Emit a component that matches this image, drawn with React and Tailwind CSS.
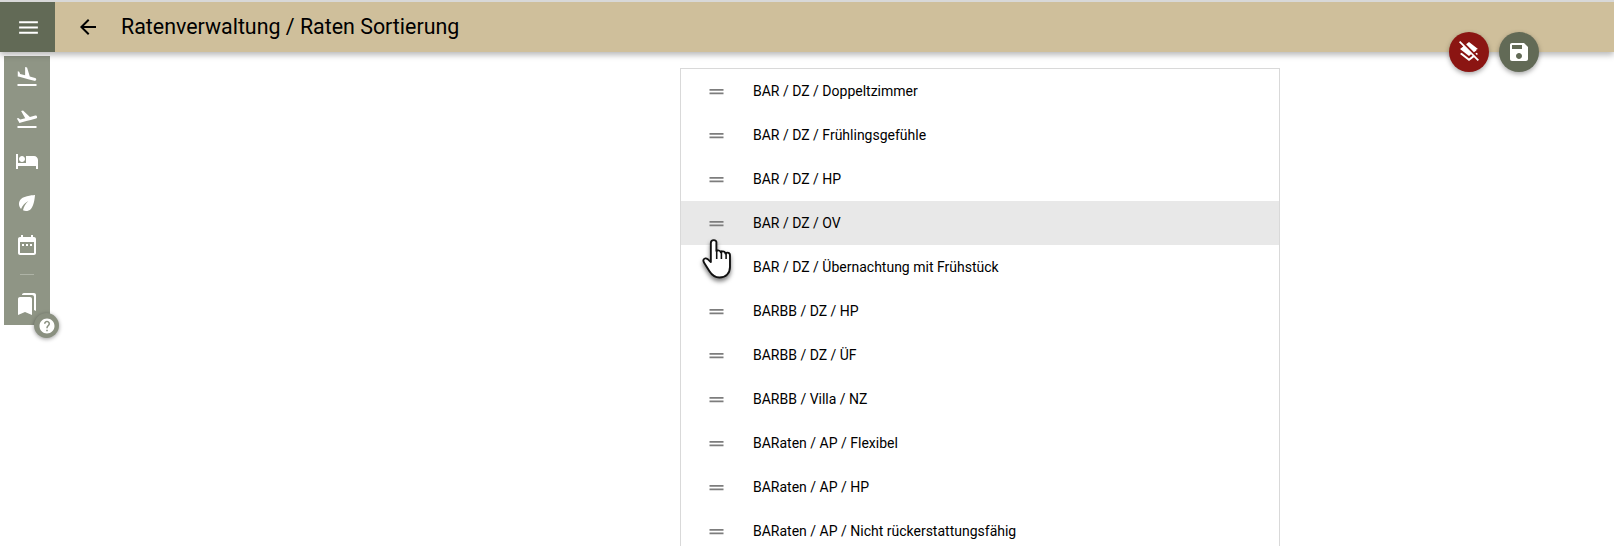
const rates = [
  'BAR / DZ / Doppeltzimmer',
  'BAR / DZ / Frühlingsgefühle',
  'BAR / DZ / HP',
  'BAR / DZ / OV',
  'BAR / DZ / Übernachtung mit Frühstück',
  'BARBB / DZ / HP',
  'BARBB / DZ / ÜF',
  'BARBB / Villa / NZ',
  'BARaten / AP / Flexibel',
  'BARaten / AP / HP',
  'BARaten / AP / Nicht rückerstattungsfähig',
];

const Icon = ({ d, className = '' }) => (
  <svg viewBox="0 0 24 24" fill="currentColor" className={className}>
    <path d={d} />
  </svg>
);

const navIcons = [
  'M2.5 19h19v2h-19zm7.18-5.73l4.35 1.16 5.31 1.42c.8.21 1.62-.26 1.84-1.06.21-.8-.26-1.62-1.06-1.84l-5.31-1.42-2.76-9.02L10.12 2v8.28L5.15 8.95l-.93-2.32-1.45-.39v5.17l1.6.43 5.31 1.43z',
  'M2.5 19h19v2h-19zm19.57-9.36c-.21-.8-1.04-1.28-1.84-1.06L14.92 10l-6.9-6.43-1.93.51 4.14 7.17-4.97 1.33-1.97-1.54-1.45.39 1.82 3.16.77 1.33 1.6-.43 5.31-1.42 4.35-1.16L21 11.49c.81-.23 1.28-1.05 1.07-1.85z',
  'M7 13c1.66 0 3-1.34 3-3S8.66 7 7 7s-3 1.34-3 3 1.34 3 3 3zm12-6h-8v7H3V5H1v15h2v-3h18v3h2v-9c0-2.21-1.79-4-4-4z',
  'M6.05 8.05c-2.73 2.73-2.73 7.15-.02 9.88 1.47-3.4 4.09-6.24 7.36-7.93-2.77 2.34-4.71 5.61-5.39 9.32 2.6 1.23 5.8.78 7.95-1.37C19.43 14.47 20 4 20 4S9.53 4.57 6.05 8.05z',
  'M9 11H7v2h2v-2zm4 0h-2v2h2v-2zm4 0h-2v2h2v-2zm2-7h-1V2h-2v2H8V2H6v2H5c-1.11 0-1.99.9-1.99 2L3 20c0 1.1.89 2 2 2h14c1.1 0 2-.9 2-2V6c0-1.1-.9-2-2-2zm0 16H5V9h14v11z',
];

const bookmarks = 'M19 18l2 1V3c0-1.1-.9-2-2-2H8.99C7.89 1 7 1.9 7 3h10c1.1 0 2 .9 2 2v13zM15 5H5c-1.1 0-2 .9-2 2v16l7-3 7 3V7c0-1.1-.9-2-2-2z';
const dragHandle = 'M20 9H4v2h16V9zM4 15h16v-2H4v2z';
const help = 'M12 2C6.48 2 2 6.48 2 12s4.48 10 10 10 10-4.48 10-10S17.52 2 12 2zm1 17h-2v-2h2v2zm2.07-7.75l-.9.92C13.45 12.9 13 13.5 13 15h-2v-.5c0-1.1.45-2.1 1.17-2.83l1.24-1.26c.37-.36.59-.86.59-1.41 0-1.1-.9-2-2-2s-2 .9-2 2H8c0-2.21 1.79-4 4-4s4 1.79 4 4c0 .88-.36 1.68-.93 2.25z';

const App = () => {
  return (
    <div className="relative h-[546px] w-[1614px] overflow-hidden bg-white font-['Roboto',sans-serif] text-black">
      {/* Top bar */}
      <header className="relative z-10 flex h-[52px] items-center border-t-2 border-[#d8d8d8] bg-[#cfbf9b] shadow-[0_3px_6px_rgba(0,0,0,0.28)]">
        <div className="flex h-[50px] w-[55px] items-center justify-center bg-[#626a56] pl-[2px] text-white">
          <Icon className="h-[25px] w-[25px]" d="M3 18h18v-2H3v2zm0-5h18v-2H3v2zm0-7v2h18V6H3z" />
        </div>
        <Icon className="ml-[21px] h-6 w-6" d="M20 11H7.83l5.59-5.59L12 4l-8 8 8 8 1.41-1.41L7.83 13H20v-2z" />
        <h1 className="ml-[21px] text-[21.4px] leading-none">Ratenverwaltung / Raten Sortierung</h1>
      </header>

      {/* Floating buttons */}
      <div className="absolute left-[1449px] top-[32px] z-20 flex gap-[10px]">
        <button className="flex h-10 w-10 items-center justify-center rounded-full bg-[#8b1512] text-white shadow-[0_2px_5px_rgba(0,0,0,0.35)]">
          <Icon className="h-6 w-6" d="M19.81 14.99l1.19-.92-1.43-1.43-1.19.92 1.43 1.43zm-.45-5.45L21 9l-9-7-2.91 2.27 7.87 7.88 2.4-1.61zM3.27 1L2 2.27l4.22 4.22L3 9l1.63 1.27L12 16l2.1-1.63 1.43 1.43L12 18.54l-7.37-5.73L3 14.07l9 7 4.95-3.85L20.73 21 22 19.73 3.27 1z" />
        </button>
        <button className="flex h-10 w-10 items-center justify-center rounded-full bg-[#626a56] text-white shadow-[0_2px_5px_rgba(0,0,0,0.35)]">
          <Icon className="h-6 w-6" d="M17 3H5c-1.11 0-2 .9-2 2v14c0 1.1.89 2 2 2h14c1.1 0 2-.9 2-2V7l-4-4zm-5 16c-1.66 0-3-1.34-3-3s1.34-3 3-3 3 1.34 3 3-1.34 3-3 3zm3-10H5V5h10v4z" />
        </button>
      </div>

      <div className="flex items-start">
        {/* Side menu */}
        <nav className="relative ml-1 mt-[4px] flex h-[269px] w-[46px] shrink-0 flex-col items-center bg-[#8f9585] pt-[9px] text-white">
          {navIcons.map((d) => (
            <Icon key={d} className="mb-[18px] h-6 w-6 shrink-0" d={d} />
          ))}
          <div className="-mt-px mb-[17px] h-px w-[14px] bg-[#aeb3a6]" />
          <Icon className="h-6 w-6 shrink-0" d={bookmarks} />
          <div className="absolute left-[30px] top-[257px] flex h-[25px] w-[25px] items-center justify-center rounded-full bg-[#8a9080] text-white shadow-[0_1px_4px_rgba(0,0,0,0.4)]">
            <Icon className="h-[18px] w-[18px]" d={help} />
          </div>
        </nav>

        {/* Rate list */}
        <div className="ml-[630px] mt-[16px] w-[600px] shrink-0 border border-[#d9d9d9] bg-white">
          {rates.map((rate) => (
            <div
              key={rate}
              className={`flex h-[44px] items-center text-[14px] ${rate === 'BAR / DZ / OV' ? 'bg-[#e8e8e8]' : ''}`}
            >
              <Icon className="ml-[25px] h-[21px] w-[21px] shrink-0 text-[#7d7d7d]" d={dragHandle} />
              <span className="ml-[26px]">{rate}</span>
            </div>
          ))}
        </div>
      </div>

      {/* Mouse pointer */}
      <svg viewBox="0 0 32 44" className="absolute left-[702px] top-[237px] z-10 h-[46px] w-[34px] drop-shadow-[0_3px_2px_rgba(0,0,0,0.5)]">
        <path
          d="M11 3c-1.6 0-2.8 1.2-2.8 2.8V24l-3-2.8c-1.4-1.2-3.4-1-4 .6-.4 1 0 2 .7 3l5 8c2 3.2 5 6 9.600 6 6 0 10-4 10-10V17.500c0-1.500-1-2.500-2.400-2.500-.8 0-1.400.3-1.900.8-.3-1.300-1.300-2.100-2.500-2.100-.8 0-1.500.3-2 .9-.4-1.100-1.300-1.800-2.500-1.800-.6 0-1.200.2-1.700.6V5.800C13.800 4.200 12.600 3 11 3z"
          fill="#ffffff"
          stroke="#111111"
          strokeWidth="1.800"
          strokeLinejoin="round"
        />
        <path d="M13.800 12v9M18.300 13v8M22.800 15v6" stroke="#111111" strokeWidth="1.500" fill="none" />
      </svg>
    </div>
  );
};

export default App;
